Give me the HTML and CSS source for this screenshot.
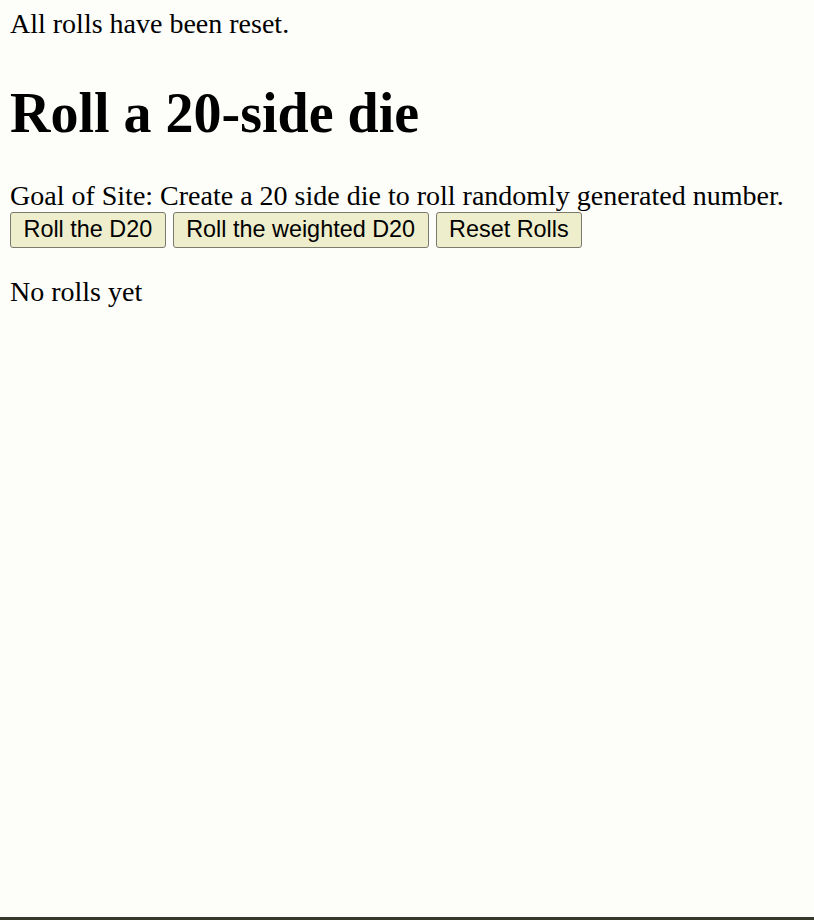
FILE: index.html
```html
<!DOCTYPE html>
<html>
<head>
<meta charset="utf-8">
<link rel="stylesheet" href="styles.css">
</head>
<body>
<div class="status">All rolls have been reset.</div>
<h1 class="title">Roll a 20-side die</h1>
<div class="goal">Goal of Site: Create a 20 side die to roll randomly generated number.</div>
<div class="actions">
  <button class="btn">Roll the D20</button>
  <button class="btn">Roll the weighted D20</button>
  <button class="btn">Reset Rolls</button>
</div>
<p class="rolls">No rolls yet</p>
</body>
</html>
```
FILE: styles.css
```css
html {
  min-height: 100%;
  box-sizing: border-box;
  border-bottom: 3px solid #38382a;
  background: #fdfdf9;
}
body {
  margin: 8px 10px;
  font-family: "Liberation Serif", "Times New Roman", serif;
  font-size: 28px;
  color: #000;
}
.status {
  line-height: 1.15;
}
.title {
  font-size: 56px;
  font-weight: bold;
  margin: 41px 0 34px;
  line-height: 1.15;
}
.goal {
  line-height: 1.15;
}
.actions {
  display: flex;
  gap: 7px;
}
.btn {
  font-family: "Liberation Sans", Arial, sans-serif;
  font-size: 23.4px;
  line-height: 1.15;
  color: #000;
  background: #efeecc;
  border: 1.5px solid #7a7a6e;
  border-radius: 3px;
  padding: 2px 12.5px;
  margin: 0;
  height: 36px;
}
.rolls {
  margin: 28px 0;
  line-height: 1.15;
}
```
